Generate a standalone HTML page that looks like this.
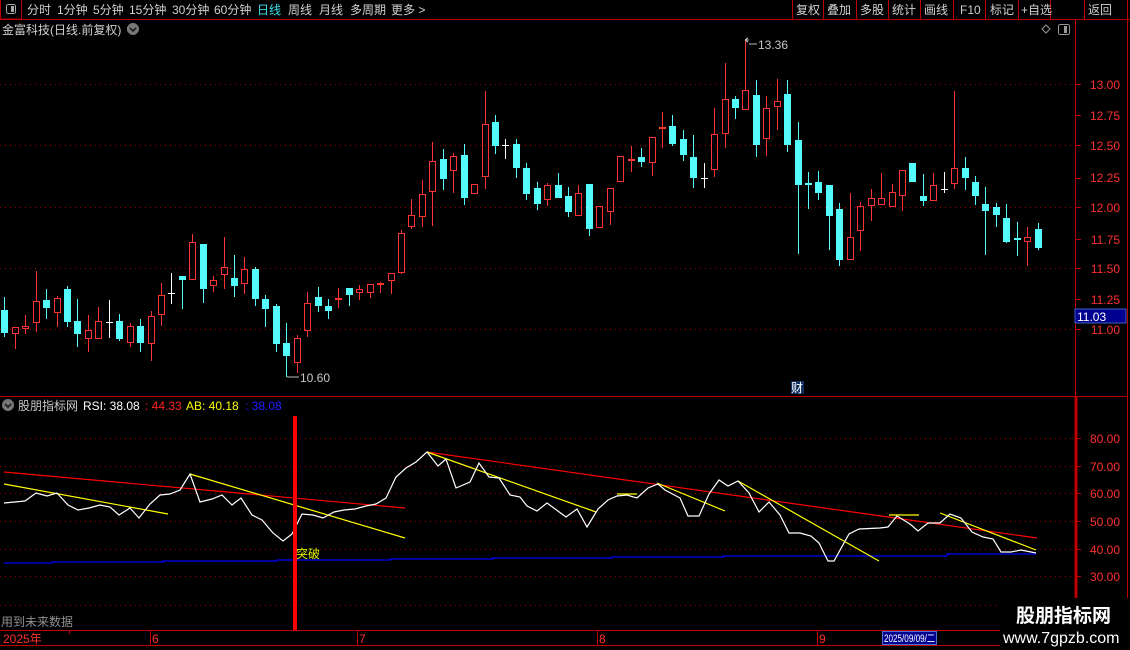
<!DOCTYPE html>
<html><head><meta charset="utf-8"><style>
html,body{margin:0;padding:0;background:#000;width:1130px;height:650px;overflow:hidden;}
svg{position:absolute;left:0;top:0;}
text{font-family:"Liberation Sans","Noto Sans CJK SC",sans-serif;font-size:12px;}
</style></head><body>
<svg id="s" width="1130" height="650" xmlns="http://www.w3.org/2000/svg" shape-rendering="crispEdges">
<rect width="1130" height="650" fill="#000"/>
<line x1="0" y1="19.5" x2="1130" y2="19.5" stroke="#c00000"/>
<rect x="0.5" y="-1" width="21" height="20" fill="none" stroke="#c00000"/>
<rect x="6.5" y="4.5" width="9" height="9" rx="2" fill="none" stroke="#aaa"/>
<rect x="11" y="6" width="3" height="6" fill="#aaa"/>
<g fill="#d0d0d0">
<text x="27" y="14">分时</text><text x="57" y="14">1分钟</text><text x="93" y="14">5分钟</text>
<text x="129" y="14">15分钟</text><text x="172" y="14">30分钟</text><text x="214" y="14">60分钟</text>
<text x="257" y="14" fill="#40e0f0">日线</text><text x="288" y="14">周线</text><text x="319" y="14">月线</text>
<text x="350" y="14">多周期</text><text x="391" y="14">更多 &gt;</text>
</g>
<g stroke="#c00000">
<line x1="792.5" y1="0" x2="792.5" y2="19"/><line x1="823.5" y1="0" x2="823.5" y2="19"/>
<line x1="856.5" y1="0" x2="856.5" y2="19"/><line x1="888.5" y1="0" x2="888.5" y2="19"/>
<line x1="920.5" y1="0" x2="920.5" y2="19"/><line x1="953.5" y1="0" x2="953.5" y2="19"/>
<line x1="985.5" y1="0" x2="985.5" y2="19"/><line x1="1018.5" y1="0" x2="1018.5" y2="19"/>
<line x1="1050.5" y1="0" x2="1050.5" y2="19"/><line x1="1084.5" y1="0" x2="1084.5" y2="19"/>
<line x1="1127.5" y1="0" x2="1127.5" y2="650"/>
</g>
<g fill="#d0d0d0">
<text x="796" y="14">复权</text><text x="827" y="14">叠加</text><text x="860" y="14">多股</text>
<text x="892" y="14">统计</text><text x="924" y="14">画线</text><text x="960" y="14">F10</text>
<text x="990" y="14">标记</text><text x="1021" y="14">+自选</text><text x="1088" y="14">返回</text>
</g>
<text x="2" y="34" fill="#d0d0d0">金富科技(日线.前复权)</text>
<circle cx="133" cy="29" r="6" fill="#777"/><path d="M130 28l3 3 3-3" stroke="#222" stroke-width="1.5" fill="none"/>
<path d="M1046 25l4 4-4 4-4-4z" fill="none" stroke="#999" shape-rendering="auto"/>
<rect x="1058.5" y="24.5" width="11" height="10" rx="2" fill="none" stroke="#999"/><rect x="1064" y="26" width="3" height="7" fill="#999"/>
<line x1="1075.5" y1="20" x2="1075.5" y2="630" stroke="#c00000"/>
<line x1="0" y1="396.5" x2="1127" y2="396.5" stroke="#c00000"/>
<line x1="1076" y1="396.5" x2="1076" y2="630" stroke="#c00000" stroke-width="3"/>
<g id="grid" stroke="#a00000" stroke-dasharray="1,4"></g>
<g fill="#ff3030" text-anchor="end" id="lab">
<text x="1120" y="89">13.00</text><text x="1120" y="120">12.75</text><text x="1120" y="150">12.50</text>
<text x="1120" y="182">12.25</text><text x="1120" y="212">12.00</text><text x="1120" y="244">11.75</text>
<text x="1120" y="273">11.50</text><text x="1120" y="304">11.25</text><text x="1120" y="334">11.00</text>
<text x="1120" y="443">80.00</text><text x="1120" y="471">70.00</text><text x="1120" y="498">60.00</text>
<text x="1120" y="526">50.00</text><text x="1120" y="554">40.00</text><text x="1120" y="581">30.00</text>
</g>
<g stroke="#c00000" id="ticks"></g>
<rect x="1075" y="309" width="51" height="14" fill="#000090" stroke="#4060c0"/>
<text x="1077" y="321" fill="#fff">11.03</text>
<g id="candles"></g>
<path d="M745 40h4M745 40l3 -2M745 40l3 2" stroke="#bbb" fill="none"/>
<line x1="749" y1="44" x2="757" y2="44" stroke="#bbb"/>
<text x="758" y="49" fill="#c8c8c8">13.36</text>
<line x1="287" y1="377" x2="299" y2="377" stroke="#bbb"/>
<text x="300" y="382" fill="#c8c8c8">10.60</text>
<rect x="791" y="381" width="13" height="13" fill="#103060"/>
<text x="791" y="392" fill="#fff">财</text>
<circle cx="8" cy="405" r="6" fill="#777"/><path d="M5 404l3 3 3-3" stroke="#222" stroke-width="1.5" fill="none"/>
<text x="18" y="410" fill="#c8c8c8">股朋指标网</text>
<text x="83" y="410" fill="#fff">RSI: 38.08</text>
<text x="145" y="410" fill="#ff2020">: 44.33</text>
<text x="186" y="410" fill="#ffff00">AB: 40.18</text>
<text x="245" y="410" fill="#2020ff">: 38.08</text>
<g fill="none" stroke-width="1.2" shape-rendering="auto">
<polyline stroke="#0000ff" stroke-width="1.3" points="4,563 52,563 52,562 163,562 163,561 277,561 277,560 390,560 390,559 493,559 493,558 612,558 612,557 723,557 723,556 947,556 947,554 1036,554"/>
<line x1="4" y1="472" x2="405" y2="508" stroke="#ff0000"/>
<line x1="427" y1="452" x2="1037" y2="538" stroke="#ff0000"/>
<line x1="4" y1="484" x2="168" y2="514" stroke="#ffff00"/>
<line x1="190" y1="474" x2="405" y2="538" stroke="#ffff00"/>
<line x1="427" y1="452" x2="596" y2="512" stroke="#ffff00"/>
<line x1="617" y1="494" x2="637" y2="494" stroke="#ffff00"/>
<line x1="657" y1="483" x2="725" y2="511" stroke="#ffff00"/>
<line x1="738" y1="481" x2="879" y2="561" stroke="#ffff00"/>
<line x1="889" y1="515" x2="919" y2="515" stroke="#ffff00"/>
<line x1="940" y1="513" x2="1036" y2="550" stroke="#ffff00"/>
<polyline stroke="#ffffff" points="4,503 25,501 36,493 47,496 57,493 68,505 78,510 89,508 100,505 110,507 119,515 130,508 139,518 150,504 160,495 170,494 180,490 190,474 200,502 212,499 222,495 232,505 241,498 252,515 262,520 273,533 283,541 292,534 302,514 313,515 323,518 334,512 344,510 355,509 366,506 376,504 386,498 396,477 406,468 416,462 427,452 438,466 446,459 456,488 470,482 479,463 489,477 499,478 510,495 520,497 527,506 537,511 547,503 566,517 577,509 587,527 598,509 608,500 617,496 627,495 637,498 648,488 658,484 665,490 680,498 688,516 699,516 709,494 719,480 728,486 738,481 749,493 759,512 769,502 780,515 789,533 800,533 811,536 819,543 828,561 834,561 849,534 859,529 880,528 888,527 897,516 910,524 918,531 928,523 940,523 950,514 961,518 972,532 983,537 993,539 1001,552 1011,552 1021,550 1036,553"/>
</g>
<rect x="293" y="416" width="4" height="214" fill="#ff0000"/>
<text x="296" y="558" fill="#e0f000">突破</text>
<text x="1" y="626" fill="#909090">用到未来数据</text>
<line x1="0" y1="630.5" x2="1127" y2="630.5" stroke="#c00000"/>
<line x1="0" y1="645.5" x2="1127" y2="645.5" stroke="#c00000"/>
<g stroke="#c00000"><line x1="69.5" y1="631" x2="69.5" y2="634"/><line x1="150.5" y1="631" x2="150.5" y2="645"/><line x1="357.5" y1="631" x2="357.5" y2="645"/><line x1="597.5" y1="631" x2="597.5" y2="645"/><line x1="817.5" y1="631" x2="817.5" y2="645"/></g>
<g fill="#ff3030"><text x="3" y="643">2025年</text><text x="152" y="643">6</text><text x="359" y="643">7</text><text x="599" y="643">8</text><text x="819" y="643">9</text></g>
<rect x="882.5" y="631.5" width="54" height="13" fill="#000090" stroke="#5070d0"/>
<text x="884" y="642" fill="#fff" style="font-size:11px" textLength="51" lengthAdjust="spacingAndGlyphs">2025/09/09/二</text>
<rect x="1000" y="598" width="130" height="52" fill="#000"/>
<text x="1016" y="622" fill="#fff" style="font-size:19px;font-weight:bold">股朋指标网</text>
<text x="1003" y="643" fill="#fff" style="font-size:16px">www.7gpzb.com</text>
</svg>
<script>
var NS="http://www.w3.org/2000/svg";
function el(p,t,a){var e=document.createElementNS(NS,t);for(var k in a)e.setAttribute(k,a[k]);p.appendChild(e);return e;}
var g=document.getElementById('grid');
[84,145,207,268,329,438,466,493,521,549,576,605].forEach(function(y){el(g,'line',{x1:0,y1:y+.5,x2:1073,y2:y+.5});});
var tk=document.getElementById('ticks');
[84,115,145,178,207,239,268,299,329,438,466,493,521,549,576].forEach(function(y){el(tk,'line',{x1:1075,y1:y+.5,x2:1081,y2:y+.5});});
var D=[[4,'c',297,310,333,337],[15,'r',327,327,334,349],[25,'r',315,326,329,334],[36,'r',271,301,323,332],[46,'c',289,300,308,319],[57,'r',296,298,313,327],[67,'c',286,289,322,327],[77,'c',299,321,334,347],[88,'r',315,330,339,352],[98,'r',307,321,339,339],[109,'w',300,322,322,338],[119,'c',314,321,339,341],[130,'r',323,326,343,347],[140,'c',319,326,343,352],[151,'r',311,316,344,361],[161,'r',283,295,315,326],[171,'w',273,293,293,304],[182,'c',276,276,280,309],[192,'r',234,242,280,280],[203,'c',244,244,289,303],[213,'r',276,280,286,292],[224,'r',237,267,275,289],[234,'c',255,278,286,297],[244,'r',257,269,284,294],[255,'c',267,269,299,306],[265,'c',295,299,309,327],[276,'c',304,306,344,352],[286,'c',323,343,356,377],[297,'r',335,338,363,373],[307,'r',292,303,331,337],[318,'c',287,297,306,312],[328,'c',299,306,311,319],[338,'r',288,298,299,308],[349,'c',288,288,295,306],[359,'r',285,289,293,300],[370,'r',284,284,293,298],[380,'r',282,283,284,293],[391,'r',273,273,281,294],[401,'r',230,233,273,274],[411,'r',199,215,227,229],[422,'r',180,194,217,227],[432,'r',142,161,192,226],[443,'c',149,159,179,190],[453,'r',153,156,171,193],[464,'c',144,155,198,205],[474,'r',184,184,194,194],[485,'r',91,124,177,189],[495,'c',115,122,146,154],[505,'w',139,145,145,159],[516,'c',139,144,168,178],[526,'c',163,168,194,200],[537,'c',182,188,204,210],[547,'r',183,185,200,206],[558,'c',173,185,198,198],[568,'c',187,196,212,217],[578,'r',185,193,216,216],[589,'c',184,184,229,236],[599,'r',206,206,228,228],[610,'r',188,188,212,225],[620,'r',156,156,182,182],[631,'r',146,159,160,172],[641,'c',148,157,162,167],[652,'r',137,137,163,176],[662,'r',112,127,129,148],[672,'c',115,126,144,146],[683,'c',130,139,155,161],[693,'c',135,157,178,188],[704,'w',163,178,178,188],[714,'r',108,134,170,177],[725,'r',63,99,134,148],[735,'c',96,99,108,119],[745,'r',40,90,110,110],[756,'c',80,95,145,157],[766,'r',96,108,139,156],[777,'r',79,101,107,130],[787,'c',80,94,145,152],[798,'c',122,140,185,254],[808,'c',172,183,185,209],[818,'c',171,182,193,200],[829,'c',185,185,216,250],[839,'c',203,209,260,266],[850,'r',193,237,260,260],[860,'r',202,206,231,251],[871,'r',189,198,206,221],[881,'r',173,198,205,205],[892,'r',184,192,207,207],[902,'r',170,170,196,211],[912,'c',163,163,182,182],[923,'c',174,196,201,206],[933,'r',173,185,201,201],[944,'w',172,189,189,193],[954,'r',91,168,184,189],[965,'c',157,168,178,190],[975,'c',176,182,196,205],[985,'c',187,204,211,255],[996,'c',203,207,215,227],[1006,'c',204,218,242,243],[1017,'c',222,238,240,256],[1027,'r',227,237,242,266],[1038,'c',223,229,248,250]];
var cg=document.getElementById('candles');
D.forEach(function(d){var x=d[0],t=d[1],h=d[2],o=d[3],b=d[4],l=d[5];
 if(t=='c'){el(cg,'line',{x1:x+.5,y1:h,x2:x+.5,y2:l,stroke:'#54fcfc'});el(cg,'rect',{x:x-3,y:o,width:7,height:Math.max(2,b-o),fill:'#54fcfc'});}
 else if(t=='r'){el(cg,'line',{x1:x+.5,y1:h,x2:x+.5,y2:o,stroke:'#ff3232'});el(cg,'line',{x1:x+.5,y1:b,x2:x+.5,y2:l,stroke:'#ff3232'});
   if(b-o<2)el(cg,'rect',{x:x-3,y:o,width:7,height:2,fill:'#ff3232'});else el(cg,'rect',{x:x-2.5,y:o+.5,width:6,height:b-o-1,fill:'none',stroke:'#ff3232'});}
 else{el(cg,'line',{x1:x+.5,y1:h,x2:x+.5,y2:l,stroke:'#fff'});el(cg,'line',{x1:x-3,y1:o+.5,x2:x+4,y2:o+.5,stroke:'#fff'});}
});
</script>
</body></html>
